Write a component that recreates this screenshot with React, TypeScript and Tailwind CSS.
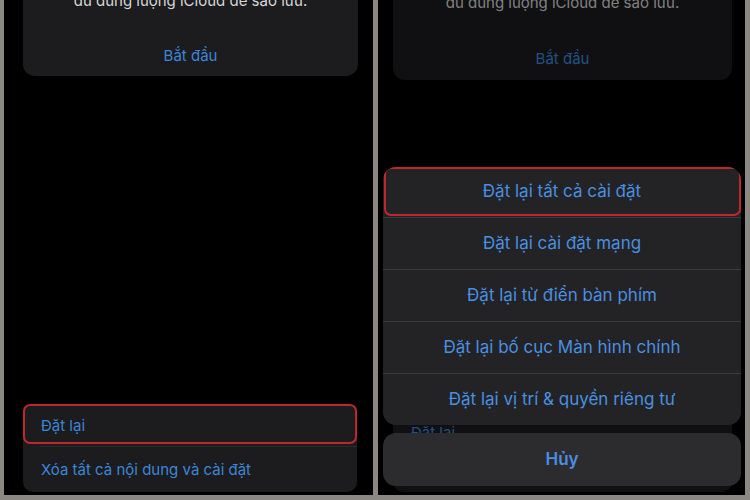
import React from "react";

const font = { fontFamily: "Inter, 'Noto Sans', 'Liberation Sans', sans-serif" };

function RedBox({ className }: { className: string }) {
  return <div className={`pointer-events-none absolute rounded-[7px] border-2 border-[#c0272d] ${className}`} />;
}

function LeftPanel() {
  return (
    <div className="relative flex h-full w-[369px] flex-col overflow-hidden bg-black">
      <div className="-mt-[14px] ml-[19px] w-[335px] rounded-[12px] bg-[#1c1c1e] pb-[10px] pt-[5px] text-center">
        <p className="text-[15px] leading-[20px] text-[#d6d6d8]">dù dung lượng iCloud để sao lưu.</p>
        <p className="mt-[35px] text-[15px] leading-[20px] text-[#3b86d8]">Bắt đầu</p>
      </div>
      <div className="mb-[3px] ml-[19px] mt-auto w-[334px] rounded-[10px] bg-[#1c1c1e]">
        <div className="relative flex h-[42px] items-center pl-[18px] pt-[2px] text-[15px] text-[#3b86d8]">
          <RedBox className="left-0 right-0 top-0 h-[40px]" />
          Đặt lại
        </div>
        <div className="ml-[17px] h-px bg-[#2a2a2c]" />
        <div className="flex h-[45px] items-center pl-[18px] pt-[2px] text-[15px] text-[#3b86d8]">
          Xóa tất cả nội dung và cài đặt
        </div>
      </div>
    </div>
  );
}

const sheetItems = [
  "Đặt lại tất cả cài đặt",
  "Đặt lại cài đặt mạng",
  "Đặt lại từ điển bàn phím",
  "Đặt lại bố cục Màn hình chính",
  "Đặt lại vị trí & quyền riêng tư",
];

function RightPanel() {
  return (
    <div className="relative flex h-full w-[367px] flex-col overflow-hidden bg-black">
      <div className="-mt-[14px] ml-[15px] w-[339px] rounded-[12px] bg-[#1c1c1e] pb-[11px] pt-[7px] text-center">
        <p className="text-[15px] leading-[20px] text-[#d6d6d8]">dù dung lượng iCloud để sao lưu.</p>
        <p className="mt-[36px] text-[15px] leading-[20px] text-[#3b86d8]">Bắt đầu</p>
      </div>
      <div className="mb-[3px] ml-[15px] mt-auto w-[339px] rounded-[10px] bg-[#1c1c1e]">
        <div className="flex h-[42px] items-center pl-[18px] pt-[6px] text-[15px] text-[#3b86d8]">Đặt lại</div>
        <div className="ml-[17px] h-px bg-[#2a2a2c]" />
        <div className="flex h-[40px] items-center pl-[18px] text-[15px] text-[#3b86d8]">
          Xóa tất cả nội dung và cài đặt
        </div>
      </div>
      <div className="absolute inset-0 bg-black/40" />
      <div className="absolute left-[5px] top-[167px] flex w-[358px] flex-col gap-[8px]">
        <div className="overflow-hidden rounded-[13px] bg-[#232325]">
          {sheetItems.map((t, i) => (
            <div
              key={t}
              className={`relative flex items-center justify-center text-[17px] text-[#4a8fe0] ${
                i > 0 ? "h-[52px] border-t border-[#3a3a3c]" : "h-[50px]"
              }`}
            >
              {i === 0 && <RedBox className="left-[1px] right-0 top-0 h-[49px]" />}
              {t}
            </div>
          ))}
        </div>
        <div className="flex h-[53px] items-center justify-center rounded-[13px] bg-[#2c2c2e] text-[17px] font-semibold text-[#4a8fe0]">
          Hủy
        </div>
      </div>
    </div>
  );
}

export default function App() {
  return (
    <div style={font} className="flex h-[500px] w-[750px] gap-[5px] bg-[#8b8782] pb-[5px] pl-[4px] pr-[5px]">
      <LeftPanel />
      <RightPanel />
    </div>
  );
}
